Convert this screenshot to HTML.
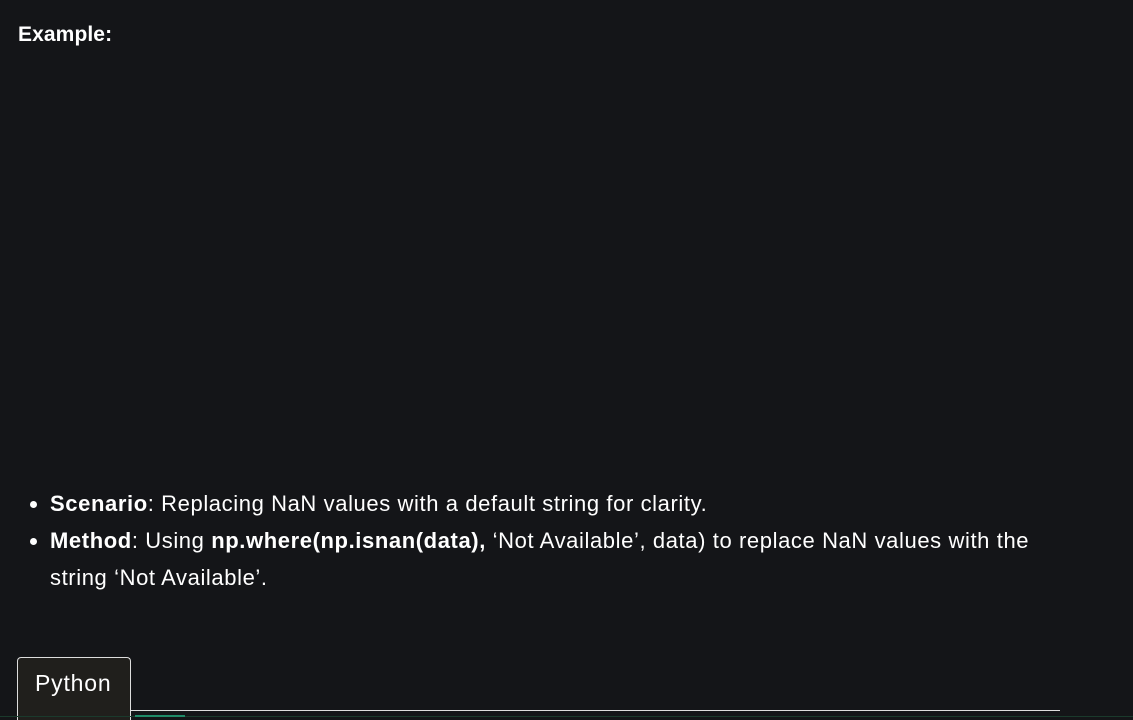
<!DOCTYPE html>
<html><head><meta charset="utf-8"><style>
html,body{margin:0;padding:0;width:1133px;height:717px;overflow:hidden;background:#141518;color:#fff;font-family:"Liberation Sans",sans-serif;}
.ex{position:absolute;left:18px;top:23px;font-size:21px;font-weight:bold;letter-spacing:0.1px;}
ul{position:absolute;left:0;top:485px;margin:0;padding-left:50px;width:1000px;font-size:22px;line-height:37px;letter-spacing:0.6px;}
li{margin:0}
.tab{position:absolute;left:17px;top:657px;width:112px;height:62px;border:1px solid #ddd;border-bottom:none;border-radius:4px 4px 0 0;background:#201f1c;}
.tab span{position:absolute;left:17px;top:12px;font-size:23px;letter-spacing:0.8px;}
.line{position:absolute;left:130px;top:710px;width:930px;height:1px;background:#ddd;}
.g{position:absolute;left:0;top:716px;width:1133px;height:1px;background:#1a3a2c;}
.g2{position:absolute;left:135px;top:715px;width:50px;height:2px;background:#1f8a68;}
</style></head><body>
<div class="ex">Example:</div>
<ul>
<li><b>Scenario</b>: Replacing NaN values with a default string for clarity.</li>
<li><b>Method</b>: Using <b>np.where(np.isnan(data),</b> ‘Not Available’, data) to replace NaN values with the string ‘Not Available’.</li>
</ul>
<div class="tab"><span>Python</span></div>
<div class="line"></div>
<div class="g"></div><div class="g2"></div>
</body></html>
